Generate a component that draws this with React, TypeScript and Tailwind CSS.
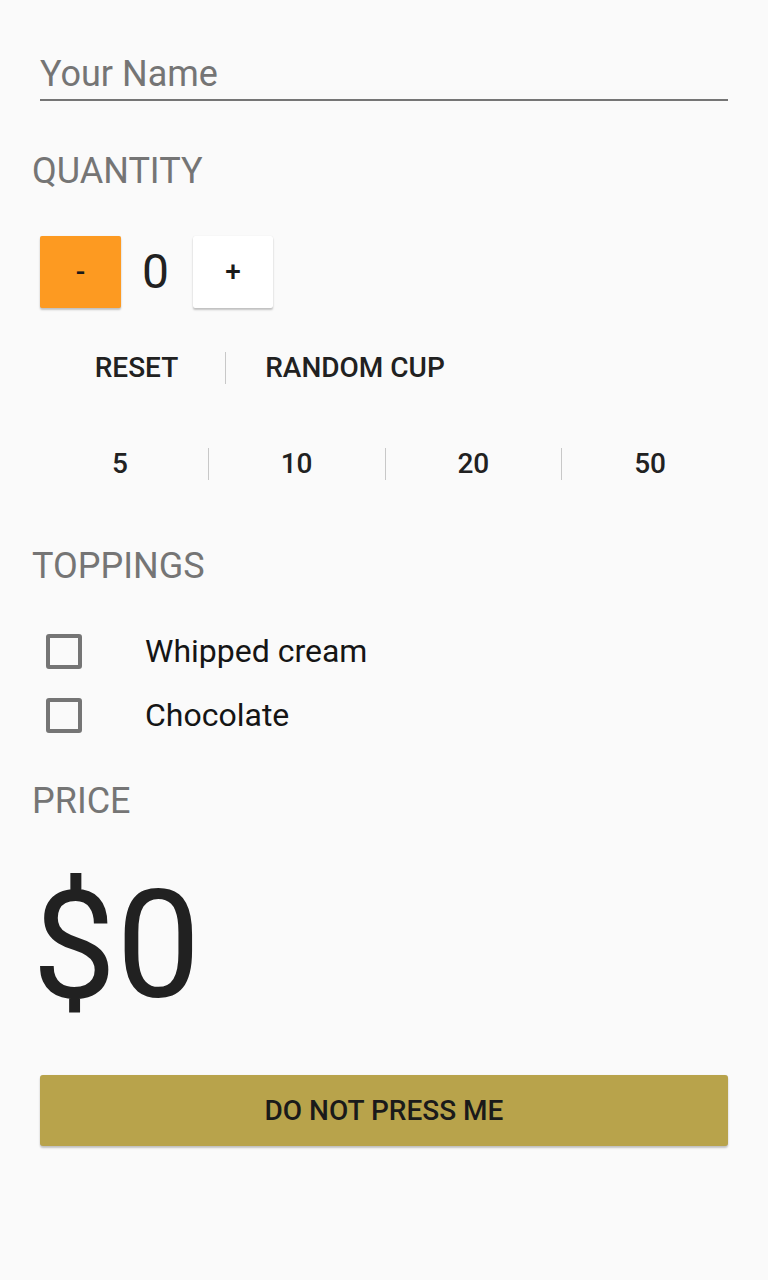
import React from "react";

export default function App() {
  return (
    <div className="w-[768px] min-h-[1280px] bg-[#fafafa] font-['Roboto',sans-serif] flex flex-col">
      {/* Name input */}
      <div className="pt-[54px] pl-[40px] pr-[40px]">
        <div className="border-b-2 border-[#757575] pb-[5px]">
          <div className="text-[36px] leading-[40px] text-[#757575]">Your Name</div>
        </div>
      </div>

      {/* QUANTITY */}
      <div className="mt-[50px] pl-[32px] text-[36px] leading-[40px] text-[#757575]">QUANTITY</div>

      <div className="mt-[45px] pl-[40px] flex items-center h-[72px]">
        <button className="w-[81px] h-[72px] bg-[#fd9a21] rounded-[2px] shadow-[0_2px_2px_rgba(0,0,0,0.22),0_0_1px_rgba(0,0,0,0.12)] text-[28px] font-medium text-[#1a1a1a] flex items-center justify-center">
          -
        </button>
        <div className="ml-[21px] mr-[24px] text-[48px] leading-[56px] text-[#212121]">0</div>
        <button className="w-[80px] h-[72px] bg-white rounded-[2px] shadow-[0_2px_2px_rgba(0,0,0,0.22),0_0_1px_rgba(0,0,0,0.12)] text-[28px] font-medium text-[#1a1a1a] flex items-center justify-center">
          +
        </button>
      </div>

      {/* Reset / Random cup */}
      <div className="mt-[44px] pl-[48px] flex h-[32px] items-center">
        <div className="w-[177px] text-center text-[28px] leading-[32px] font-medium text-[#212121]">RESET</div>
        <div className="w-px h-[32px] bg-[#c8c8c8]" />
        <div className="w-[258px] text-center text-[28px] leading-[32px] font-medium text-[#212121]">RANDOM CUP</div>
      </div>

      {/* Quick amounts */}
      <div className="mt-[64px] ml-[32px] w-[706px] flex h-[32px] items-center">
        <div className="flex-1 text-center text-[28px] leading-[32px] font-medium text-[#212121]">5</div>
        <div className="w-px h-[32px] bg-[#c8c8c8]" />
        <div className="flex-1 text-center text-[28px] leading-[32px] font-medium text-[#212121]">10</div>
        <div className="w-px h-[32px] bg-[#c8c8c8]" />
        <div className="flex-1 text-center text-[28px] leading-[32px] font-medium text-[#212121]">20</div>
        <div className="w-px h-[32px] bg-[#c8c8c8]" />
        <div className="flex-1 text-center text-[28px] leading-[32px] font-medium text-[#212121]">50</div>
      </div>

      {/* TOPPINGS */}
      <div className="mt-[66px] pl-[32px] text-[36px] leading-[40px] text-[#757575]">TOPPINGS</div>

      <div className="mt-[33px] flex flex-col">
        {["Whipped cream", "Chocolate"].map((t) => (
          <div key={t} className="h-[64px] pl-[46px] flex items-center">
            <div className="w-[36px] h-[35px] border-[4px] border-[#757575] rounded-[3px]" />
            <div className="ml-[63px] text-[32px] leading-[64px] text-[#151515]">{t}</div>
          </div>
        ))}
      </div>

      {/* PRICE */}
      <div className="mt-[34px] pl-[32px] text-[36px] leading-[40px] text-[#757575]">PRICE</div>

      <div className="mt-[35px] pl-[32px] text-[150px] leading-[180px] text-[#212121]">$0</div>

      <div className="mt-[39px] px-[40px]">
        <button className="w-full h-[71px] bg-[#b8a34b] rounded-[3px] shadow-[0_2px_2px_rgba(0,0,0,0.22),0_0_1px_rgba(0,0,0,0.12)] text-[28px] font-medium text-[#1a1a1a] flex items-center justify-center">
          DO NOT PRESS ME
        </button>
      </div>
    </div>
  );
}
